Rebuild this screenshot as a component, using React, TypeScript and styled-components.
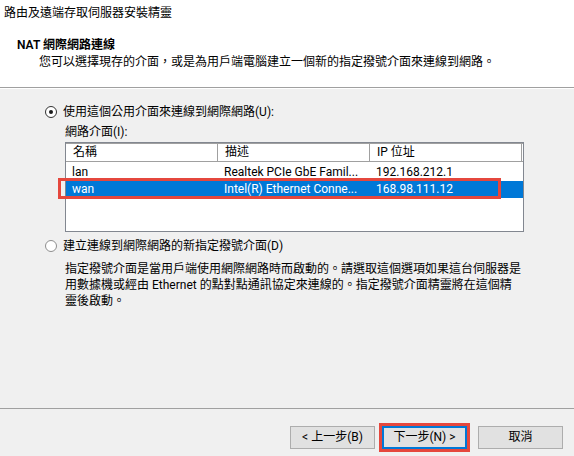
import React from "react";
import styled, { createGlobalStyle } from "styled-components";

const FONT = `Roboto, "Noto Sans CJK TC", sans-serif`;

const Global = createGlobalStyle`
  html, body { margin: 0; padding: 0; }
  body {
    background: #f0f0f0;
    font-family: ${FONT};
    font-size: 12px;
    color: #000;
  }
  * { box-sizing: border-box; }
`;

const Window = styled.div`
  width: 574px;
  height: 456px;
  display: flex;
  flex-direction: column;
  background: #f0f0f0;
  overflow: hidden;
`;

const Header = styled.header`
  flex-shrink: 0;
  height: 88px;
  background: #fff;
  border-bottom: 1px solid #a0a0a0;
  box-shadow: 0 1px 0 #fff;
`;

const Caption = styled.div`
  height: 27px;
  line-height: 27px;
  padding-left: 4px;
`;

const HeaderTitle = styled.div`
  margin: 10px 0 0 17px;
  line-height: 17px;
  font-weight: 600;
`;

const HeaderSubtitle = styled.div`
  padding-left: 39px;
  line-height: 16px;
`;

const Body = styled.main`
  flex: 1;
  padding: 16px 0 0 45px;
`;

const RadioRow = styled.label<{ $top?: number }>`
  display: flex;
  align-items: center;
  gap: 6px;
  height: 16px;
  line-height: 16px;
  margin-top: ${(p) => p.$top ?? 0}px;
`;

const RadioDot = styled.span<{ $checked?: boolean }>`
  width: 12px;
  height: 12px;
  border-radius: 50%;
  background: #fff;
  border: 1px solid ${(p) => (p.$checked ? "#333" : "#8e8e8e")};
  display: grid;
  place-items: center;
  flex-shrink: 0;
  &::after {
    content: "";
    width: 4px;
    height: 4px;
    border-radius: 50%;
    background: ${(p) => (p.$checked ? "#1a1a1a" : "transparent")};
  }
`;

const Indent = styled.div<{ $top?: number }>`
  padding-left: 20px;
  margin-top: ${(p) => p.$top ?? 0}px;
`;

const FieldLabel = styled.div`
  margin-top: 4px;
  line-height: 16px;
`;

const ListBox = styled.div`
  position: relative;
  margin-top: 2px;
  width: 459px;
  height: 90px;
  background: #fff;
  border: 1px solid #828790;
`;

const ListHeader = styled.div`
  display: flex;
  height: 19px;
  border-top: 1px solid #a0a0a0;
  border-bottom: 1px solid #a0a0a0;
`;

const HeaderCell = styled.div`
  width: 152px;
  padding-left: 7px;
  line-height: 17px;
  border-right: 1px solid #a0a0a0;
  white-space: nowrap;
`;

const Rows = styled.div`
  padding-top: 2px;
`;

const Row = styled.div<{ $selected?: boolean }>`
  display: flex;
  height: 17px;
  line-height: 17px;
  background: ${(p) => (p.$selected ? "#0078d7" : "transparent")};
  color: ${(p) => (p.$selected ? "#fff" : "#000")};
`;

const Cell = styled.div`
  width: 152px;
  padding-left: 6px;
  white-space: nowrap;
  overflow: hidden;
`;

const Highlight = styled.div`
  position: absolute;
  left: -8px;
  top: 35px;
  width: 443px;
  height: 21px;
  border: 3px solid #e5473d;
  pointer-events: none;
`;

const Description = styled.p`
  margin: 0;
  line-height: 16px;
  white-space: nowrap;
`;

const Footer = styled.footer`
  flex-shrink: 0;
  height: 48px;
  border-top: 1px solid #a0a0a0;
  display: flex;
  justify-content: flex-end;
  align-items: flex-start;
  padding: 17px 11px 0 0;
`;

const Button = styled.button<{ $primary?: boolean; $gap?: number }>`
  width: 85px;
  height: 23px;
  margin-left: ${(p) => p.$gap ?? 0}px;
  padding: 0;
  font-family: ${FONT};
  font-size: 12px;
  color: #000;
  background: #e1e1e1;
  border: 1px solid ${(p) => (p.$primary ? "#0078d7" : "#adadad")};
  box-shadow: ${(p) => (p.$primary ? "inset 0 0 0 1px #0078d7" : "none")};
  outline: ${(p) => (p.$primary ? "3px solid #e5473d" : "none")};
  line-height: 21px;
`;

type Iface = { name: string; desc: string; ip: string; selected?: boolean };

const interfaces: Iface[] = [
  { name: "lan", desc: "Realtek PCIe GbE Famil...", ip: "192.168.212.1" },
  { name: "wan", desc: "Intel(R) Ethernet Conne...", ip: "168.98.111.12", selected: true },
];

export default function App() {
  return (
    <>
      <Global />
      <Window>
        <Header>
          <Caption>路由及遠端存取伺服器安裝精靈</Caption>
          <HeaderTitle>NAT 網際網路連線</HeaderTitle>
          <HeaderSubtitle>
            您可以選擇現存的介面，或是為用戶端電腦建立一個新的指定撥號介面來連線到網路。
          </HeaderSubtitle>
        </Header>
        <Body>
          <RadioRow>
            <RadioDot $checked />
            <span>使用這個公用介面來連線到網際網路(U):</span>
          </RadioRow>
          <Indent>
            <FieldLabel>網路介面(I):</FieldLabel>
            <ListBox>
              <ListHeader>
                <HeaderCell>名稱</HeaderCell>
                <HeaderCell>描述</HeaderCell>
                <HeaderCell>IP 位址</HeaderCell>
              </ListHeader>
              <Rows>
                {interfaces.map((it) => (
                  <Row key={it.name} $selected={it.selected}>
                    <Cell>{it.name}</Cell>
                    <Cell>{it.desc}</Cell>
                    <Cell>{it.ip}</Cell>
                  </Row>
                ))}
              </Rows>
              <Highlight />
            </ListBox>
          </Indent>
          <RadioRow $top={6}>
            <RadioDot />
            <span>建立連線到網際網路的新指定撥號介面(D)</span>
          </RadioRow>
          <Indent $top={7}>
            <Description>
              指定撥號介面是當用戶端使用網際網路時而啟動的。請選取這個選項如果這台伺服器是
              <br />
              用數據機或經由 Ethernet 的點對點通訊協定來連線的。指定撥號介面精靈將在這個精
              <br />
              靈後啟動。
            </Description>
          </Indent>
        </Body>
        <Footer>
          <Button>&lt; 上一步(B)</Button>
          <Button $primary $gap={7}>下一步(N) &gt;</Button>
          <Button $gap={11}>取消</Button>
        </Footer>
      </Window>
    </>
  );
}
